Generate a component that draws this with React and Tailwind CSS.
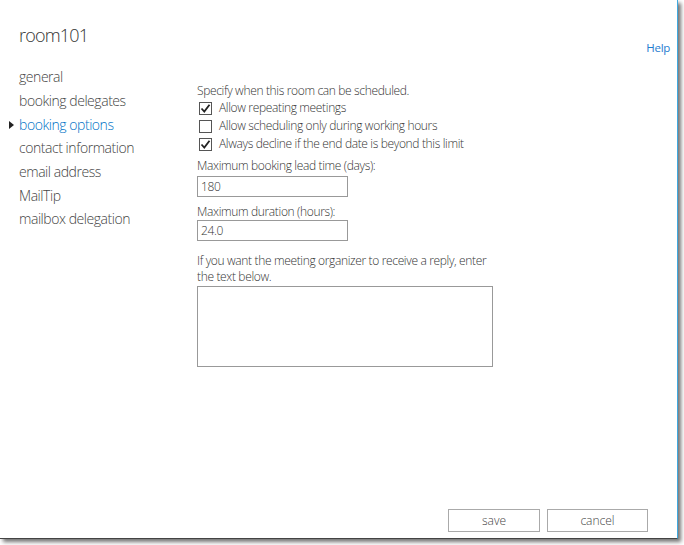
import React from "react";

const Check = ({ checked }) => (
  <span className="w-[13px] h-[13px] border border-[#555] bg-white flex items-center justify-center shrink-0">
    {checked && (
      <svg width="11" height="11" viewBox="0 0 11 11">
        <path d="M1.5 5.5 L4.3 8.5 L9.5 1.8" fill="none" stroke="#222" strokeWidth="1.8" />
      </svg>
    )}
  </span>
);

export default function App() {
  const nav = ["general", "booking delegates", "booking options", "contact information", "email address", "MailTip", "mailbox delegation"];
  return (
    <div className="w-[684px] h-[545px] bg-white relative overflow-hidden" style={{ fontFamily: "'Open Sans', 'Liberation Sans', sans-serif" }}>
      <div className="w-[678px] h-[539px] border-r border-b border-r-[#3fa9e0] border-b-[#444] shadow-[3px_3px_4px_rgba(0,0,0,0.55)] flex flex-col relative">
        <div className="flex justify-between items-start pl-[19px] pr-[7px] pt-[23px]">
          <div className="text-[18px] tracking-[-0.8px] font-light text-[#333] leading-[24px]">room101</div>
          <span className="text-[11.5px] tracking-[-0.3px] text-[#1f7ccf] mt-[16px]">Help</span>
        </div>
        <div className="flex flex-1 mt-[9px]">
          <div className="w-[197px] flex flex-col">
            {nav.map((n) => (
              <div key={n} className={`relative pl-[19px] h-[23.7px] leading-[23.7px] text-[14px] tracking-[-0.45px] font-light ${n === "booking options" ? "text-[#0072c6]" : "text-[#444]"}`}>
                {n === "booking options" && (
                  <span className="absolute left-[9px] top-[8px] w-0 h-0 border-t-[4px] border-b-[4px] border-l-[5px] border-t-transparent border-b-transparent border-l-[#222]" />
                )}
                {n}
              </div>
            ))}
          </div>
          <div className="flex flex-col text-[12px] tracking-[-0.35px] font-light text-[#333] pt-[18px]">
            <div className="leading-[16px]">Specify when this room can be scheduled.</div>
            <div className="flex flex-col pl-[2px]">
              {[
                ["Allow repeating meetings", true],
                ["Allow scheduling only during working hours", false],
                ["Always decline if the end date is beyond this limit", true],
              ].map(([t, c]) => (
                <div key={t} className="flex items-center gap-[7px] h-[18px]">
                  <Check checked={c} />
                  <span>{t}</span>
                </div>
              ))}
            </div>
            <div className="mt-[5px] leading-[16px]">Maximum booking lead time (days):</div>
            <div className="mt-[2px] w-[151px] h-[21px] border border-[#999] flex items-center pl-[3px]">180</div>
            <div className="mt-[7px] leading-[16px]">Maximum duration (hours):</div>
            <div className="w-[151px] h-[21px] border border-[#999] flex items-center pl-[3px]">24.0</div>
            <div className="mt-[12px] w-[300px] leading-[16px]">If you want the meeting organizer to receive a reply, enter the text below.</div>
            <div className="mt-[1px] w-[296px] h-[81px] border border-[#999]" />
          </div>
        </div>
        <div className="flex justify-end gap-[7px] pr-[29px] pb-[6px]">
          <div className="w-[92px] h-[23px] border border-[#aaa] bg-white flex items-center justify-center text-[12px] font-light text-[#444]">save</div>
          <div className="w-[101px] h-[23px] border border-[#aaa] bg-white flex items-center justify-center text-[12px] font-light text-[#444]">cancel</div>
        </div>
      </div>
    </div>
  );
}
